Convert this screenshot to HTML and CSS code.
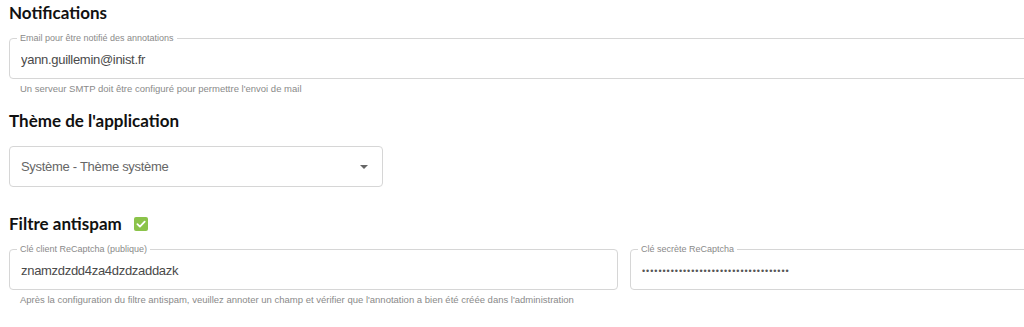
FILE: index.html
```html
<!DOCTYPE html>
<html lang="fr">

<head>
  <meta charset="UTF-8" />
  <meta name="viewport" content="width=device-width, initial-scale=1.0" />
  <title>Paramètres</title>
  <link rel="stylesheet" href="styles.css">
</head>

<body>
  <div class="settings">
    <h2 class="title">Notifications</h2>
    <fieldset class="field">
      <legend>Email pour être notifié des annotations</legend>
      <input type="text" value="yann.guillemin@inist.fr" />
    </fieldset>
    <p class="helper">Un serveur SMTP doit être configuré pour permettre l'envoi de mail</p>

    <h2 class="title">Thème de l'application</h2>
    <div class="select">
      <span>Système - Thème système</span>
      <i class="arrow"></i>
    </div>

    <h2 class="title">Filtre antispam
      <span class="check">
        <svg viewBox="0 0 14 14" width="14" height="14">
          <path d="M3.4 7.2 L5.9 9.6 L10.7 4.6" fill="none" stroke="#fff" stroke-width="1.8" stroke-linecap="round" stroke-linejoin="round" />
        </svg>
      </span>
    </h2>
    <div class="row">
      <fieldset class="field">
        <legend>Clé client ReCaptcha (publique)</legend>
        <input type="text" value="znamzdzdd4za4dzdzaddazk" />
      </fieldset>
      <fieldset class="field">
        <legend>Clé secrète ReCaptcha</legend>
        <input type="password" value="abcdefghijklmnopqrstuvwxyz1234567890" />
      </fieldset>
    </div>
    <p class="helper">Après la configuration du filtre antispam, veuillez annoter un champ et vérifier que l'annotation a bien été créée dans l'administration</p>
  </div>
</body>

</html>
```

FILE: styles.css
```css
* {
  box-sizing: border-box;
}

body {
  margin: 0;
  overflow: hidden;
  background: #fff;
  font-family: "Liberation Sans", Arial, sans-serif;
}

.settings {
  width: 1239px;
  padding: 2px 0 0 9px;
}

.title {
  margin: 0;
  height: 24px;
  padding: 1px 0 3px 0;
  font-family: Lato, "Open Sans", sans-serif;
  font-size: 17px;
  font-weight: 700;
  line-height: 20px;
  color: #111;
  display: flex;
  align-items: center;
}

.field {
  margin: 6px 0 0 0;
  padding: 0 11px 3px 11px;
  border: 1px solid #d6d6d6;
  border-radius: 4px;
  min-width: 0;
}

.field legend {
  margin-left: -4px;
  padding: 0 3px;
  font-size: 9px;
  line-height: 12px;
  color: #8a8a8a;
}

.field input {
  width: 100%;
  height: 31px;
  border: none;
  outline: none;
  padding: 0;
  font-family: "Liberation Sans", Arial, sans-serif;
  font-size: 13px;
  letter-spacing: -0.3px;
  color: #4a4a4a;
  background: transparent;
}

.field input[type="password"] {
  font-size: 9px;
  letter-spacing: 0.95px;
  color: #555;
}

.helper {
  margin: 4px 0 0 11px;
  font-size: 9.5px;
  line-height: 12px;
  color: #8a8a8a;
}

.settings .helper + .title {
  margin-top: 15px;
}

.select {
  width: 374px;
  height: 41px;
  margin-top: 12px;
  padding: 0 11px;
  border: 1px solid #d6d6d6;
  border-radius: 4px;
  display: flex;
  align-items: center;
  justify-content: space-between;
  font-size: 13px;
  letter-spacing: -0.3px;
  color: #666;
}

.arrow {
  width: 0;
  height: 0;
  border-left: 4px solid transparent;
  border-right: 4px solid transparent;
  border-top: 4px solid #666;
  margin-right: 3px;
}

.select + .title {
  margin-top: 26px;
}

.check {
  width: 14px;
  height: 14px;
  margin-left: 12px;
  border-radius: 2px;
  background: #8bc34a;
  display: flex;
}

.row {
  display: flex;
  gap: 12px;
}

.row .field {
  flex: 1;
}
```
